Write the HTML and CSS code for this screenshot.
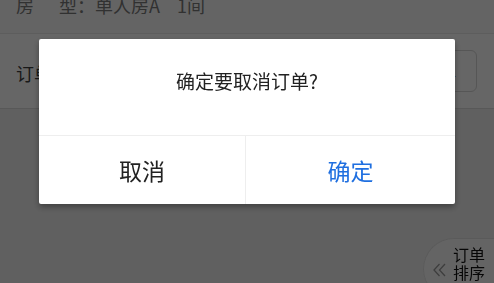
FILE: index.html
```html
<!DOCTYPE html>
<html lang="zh-CN">
<head>
<meta charset="utf-8">
<title>取消订单</title>
<link rel="stylesheet" href="styles.css">
</head>
<body>
<div class="page">
  <div class="info">
    <span class="lbl">房<span class="sp"></span>型：</span><span class="val">单人房A</span><span class="cnt">1间</span>
  </div>
  <div class="orderbar">
    <span class="ot">订单状态：待支付</span>
    <button class="btn">取消订单</button>
  </div>
</div>
<div class="float">
  <svg class="chev" width="13" height="14" viewBox="0 0 13 14" aria-hidden="true">
    <path d="M6.5 1 L1 7 L6.5 13 M12 1 L6.5 7 L12 13" fill="none" stroke="#9a9a9a" stroke-width="1.3"/>
  </svg>
  <div class="ft">
    <span class="fl">订单</span>
    <span class="fl">排序</span>
  </div>
</div>
<div class="mask">
  <div class="dialog">
    <div class="title">确定要取消订单?</div>
    <div class="actions">
      <div class="act cancel">取消</div>
      <div class="act ok">确定</div>
    </div>
  </div>
</div>
</body>
</html>
```
FILE: styles.css
```css
html, body {
  margin: 0;
  padding: 0;
  height: 100%;
  background: #f0f0f0;
  font-family: "Noto Sans CJK SC", "Noto Sans", sans-serif;
  overflow: hidden;
}
.page {
  display: flex;
  flex-direction: column;
}
.info {
  height: 33px;
  background: #fafafa;
  display: flex;
  align-items: flex-start;
  padding-left: 16px;
  font-size: 18px;
  line-height: 10px;
  color: #7a7a7a;
}
.sp {
  display: inline-block;
  width: 25px;
}
.cnt {
  margin-left: 17px;
}
.orderbar {
  height: 74px;
  background: #ffffff;
  border-top: 1px solid #e8e8e8;
  border-bottom: 1px solid #dddddd;
  display: flex;
  align-items: center;
  justify-content: space-between;
  padding: 0 17px 0 16px;
  font-size: 18px;
  color: #404040;
}
.ot {
  padding-top: 4px;
}
.btn {
  height: 42px;
  padding: 0 20px;
  border: 1px solid #d6d6d6;
  border-radius: 6px;
  background: #fff;
  font-family: inherit;
  font-size: 16px;
  color: #333;
}
.float {
  position: fixed;
  right: 0;
  top: 238px;
  width: 71px;
  height: 62px;
  box-sizing: border-box;
  background: #fbfbfb;
  border: 1px solid #e2e2e2;
  border-right: none;
  border-radius: 31px 0 0 31px;
  display: flex;
  align-items: flex-start;
  padding: 7px 0 0 9px;
  gap: 7px;
}
.chev {
  margin-top: 17px;
  flex: none;
}
.ft {
  display: flex;
  flex-direction: column;
  gap: 1px;
  font-size: 16px;
  line-height: 17px;
  color: #111;
}
.fl {
  display: block;
}
.mask {
  position: fixed;
  inset: 0;
  background: rgba(0, 0, 0, 0.6);
  display: flex;
  justify-content: center;
  align-items: flex-start;
  padding-top: 39px;
}
.dialog {
  width: 416px;
  background: #fff;
  border-radius: 2px;
  box-shadow: 0 3px 6px rgba(0, 0, 0, 0.35);
  display: flex;
  flex-direction: column;
}
.title {
  height: 97px;
  box-sizing: border-box;
  padding-top: 28px;
  text-align: center;
  font-size: 19px;
  line-height: 27px;
  color: #222;
  border-bottom: 1px solid #eeeeee;
}
.actions {
  display: flex;
  height: 68px;
}
.act {
  flex: 1;
  display: flex;
  align-items: center;
  justify-content: center;
  font-size: 23px;
}
.cancel {
  color: #222;
  border-right: 1px solid #eeeeee;
  flex: 0 0 206px;
}
.ok {
  color: #1f6fe0;
}
```
